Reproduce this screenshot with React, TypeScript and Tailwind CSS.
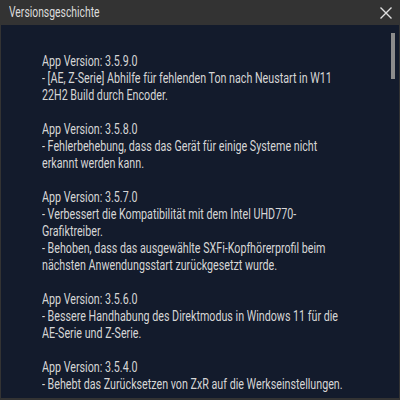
import React from "react";

const blocks: string[][] = [
  [
    "App Version: 3.5.9.0",
    "- [AE, Z-Serie] Abhilfe für fehlenden Ton nach Neustart in W11",
    "22H2 Build durch Encoder.",
  ],
  [
    "App Version: 3.5.8.0",
    "- Fehlerbehebung, dass das Gerät für einige Systeme nicht",
    "erkannt werden kann.",
  ],
  [
    "App Version: 3.5.7.0",
    "- Verbessert die Kompatibilität mit dem Intel UHD770-",
    "Grafiktreiber.",
    "- Behoben, dass das ausgewählte SXFi-Kopfhörerprofil beim",
    "nächsten Anwendungsstart zurückgesetzt wurde.",
  ],
  [
    "App Version: 3.5.6.0",
    "- Bessere Handhabung des Direktmodus in Windows 11 für die",
    "AE-Serie und Z-Serie.",
  ],
  [
    "App Version: 3.5.4.0",
    "- Behebt das Zurücksetzen von ZxR auf die Werkseinstellungen.",
  ],
];

export default function App() {
  return (
    <div
      className="w-[400px] h-[400px] flex flex-col bg-[#333333] overflow-hidden"
      style={{ fontFamily: 'Roboto, "Liberation Sans", sans-serif' }}
    >
      <div className="h-[25px] flex items-center justify-between pl-[9px] pr-[6px] shrink-0">
        <span className="text-[14px] text-[#dcdcdc] origin-left scale-x-[0.74] inline-block">Versionsgeschichte</span>
        <svg width="14" height="14" viewBox="0 0 14 14" className="mr-[1px]">
          <path d="M1.5 1.5 L12.5 12.5 M12.5 1.5 L1.5 12.5" stroke="#e0e0e0" strokeWidth="1.4" />
        </svg>
      </div>
      <div className="flex-1 mx-[1px] mb-[2px] bg-[#131b2c] flex relative">
        <div className="flex-1 pt-[28px] pl-[41px]">
          <div className="flex flex-col gap-[17px] origin-left scale-x-[0.765]">
            {blocks.map((b, i) => (
              <div key={i} className="flex flex-col">
                {b.map((l, j) => (
                  <div key={j} className="h-[17px] leading-[17px] text-[14px] text-[#d6d6d6] whitespace-nowrap">
                    {l}
                  </div>
                ))}
              </div>
            ))}
          </div>
        </div>
        <div className="w-[4px] h-[46px] bg-[#8c8c8c] absolute right-[4px] top-[8px]" />
      </div>
    </div>
  );
}
